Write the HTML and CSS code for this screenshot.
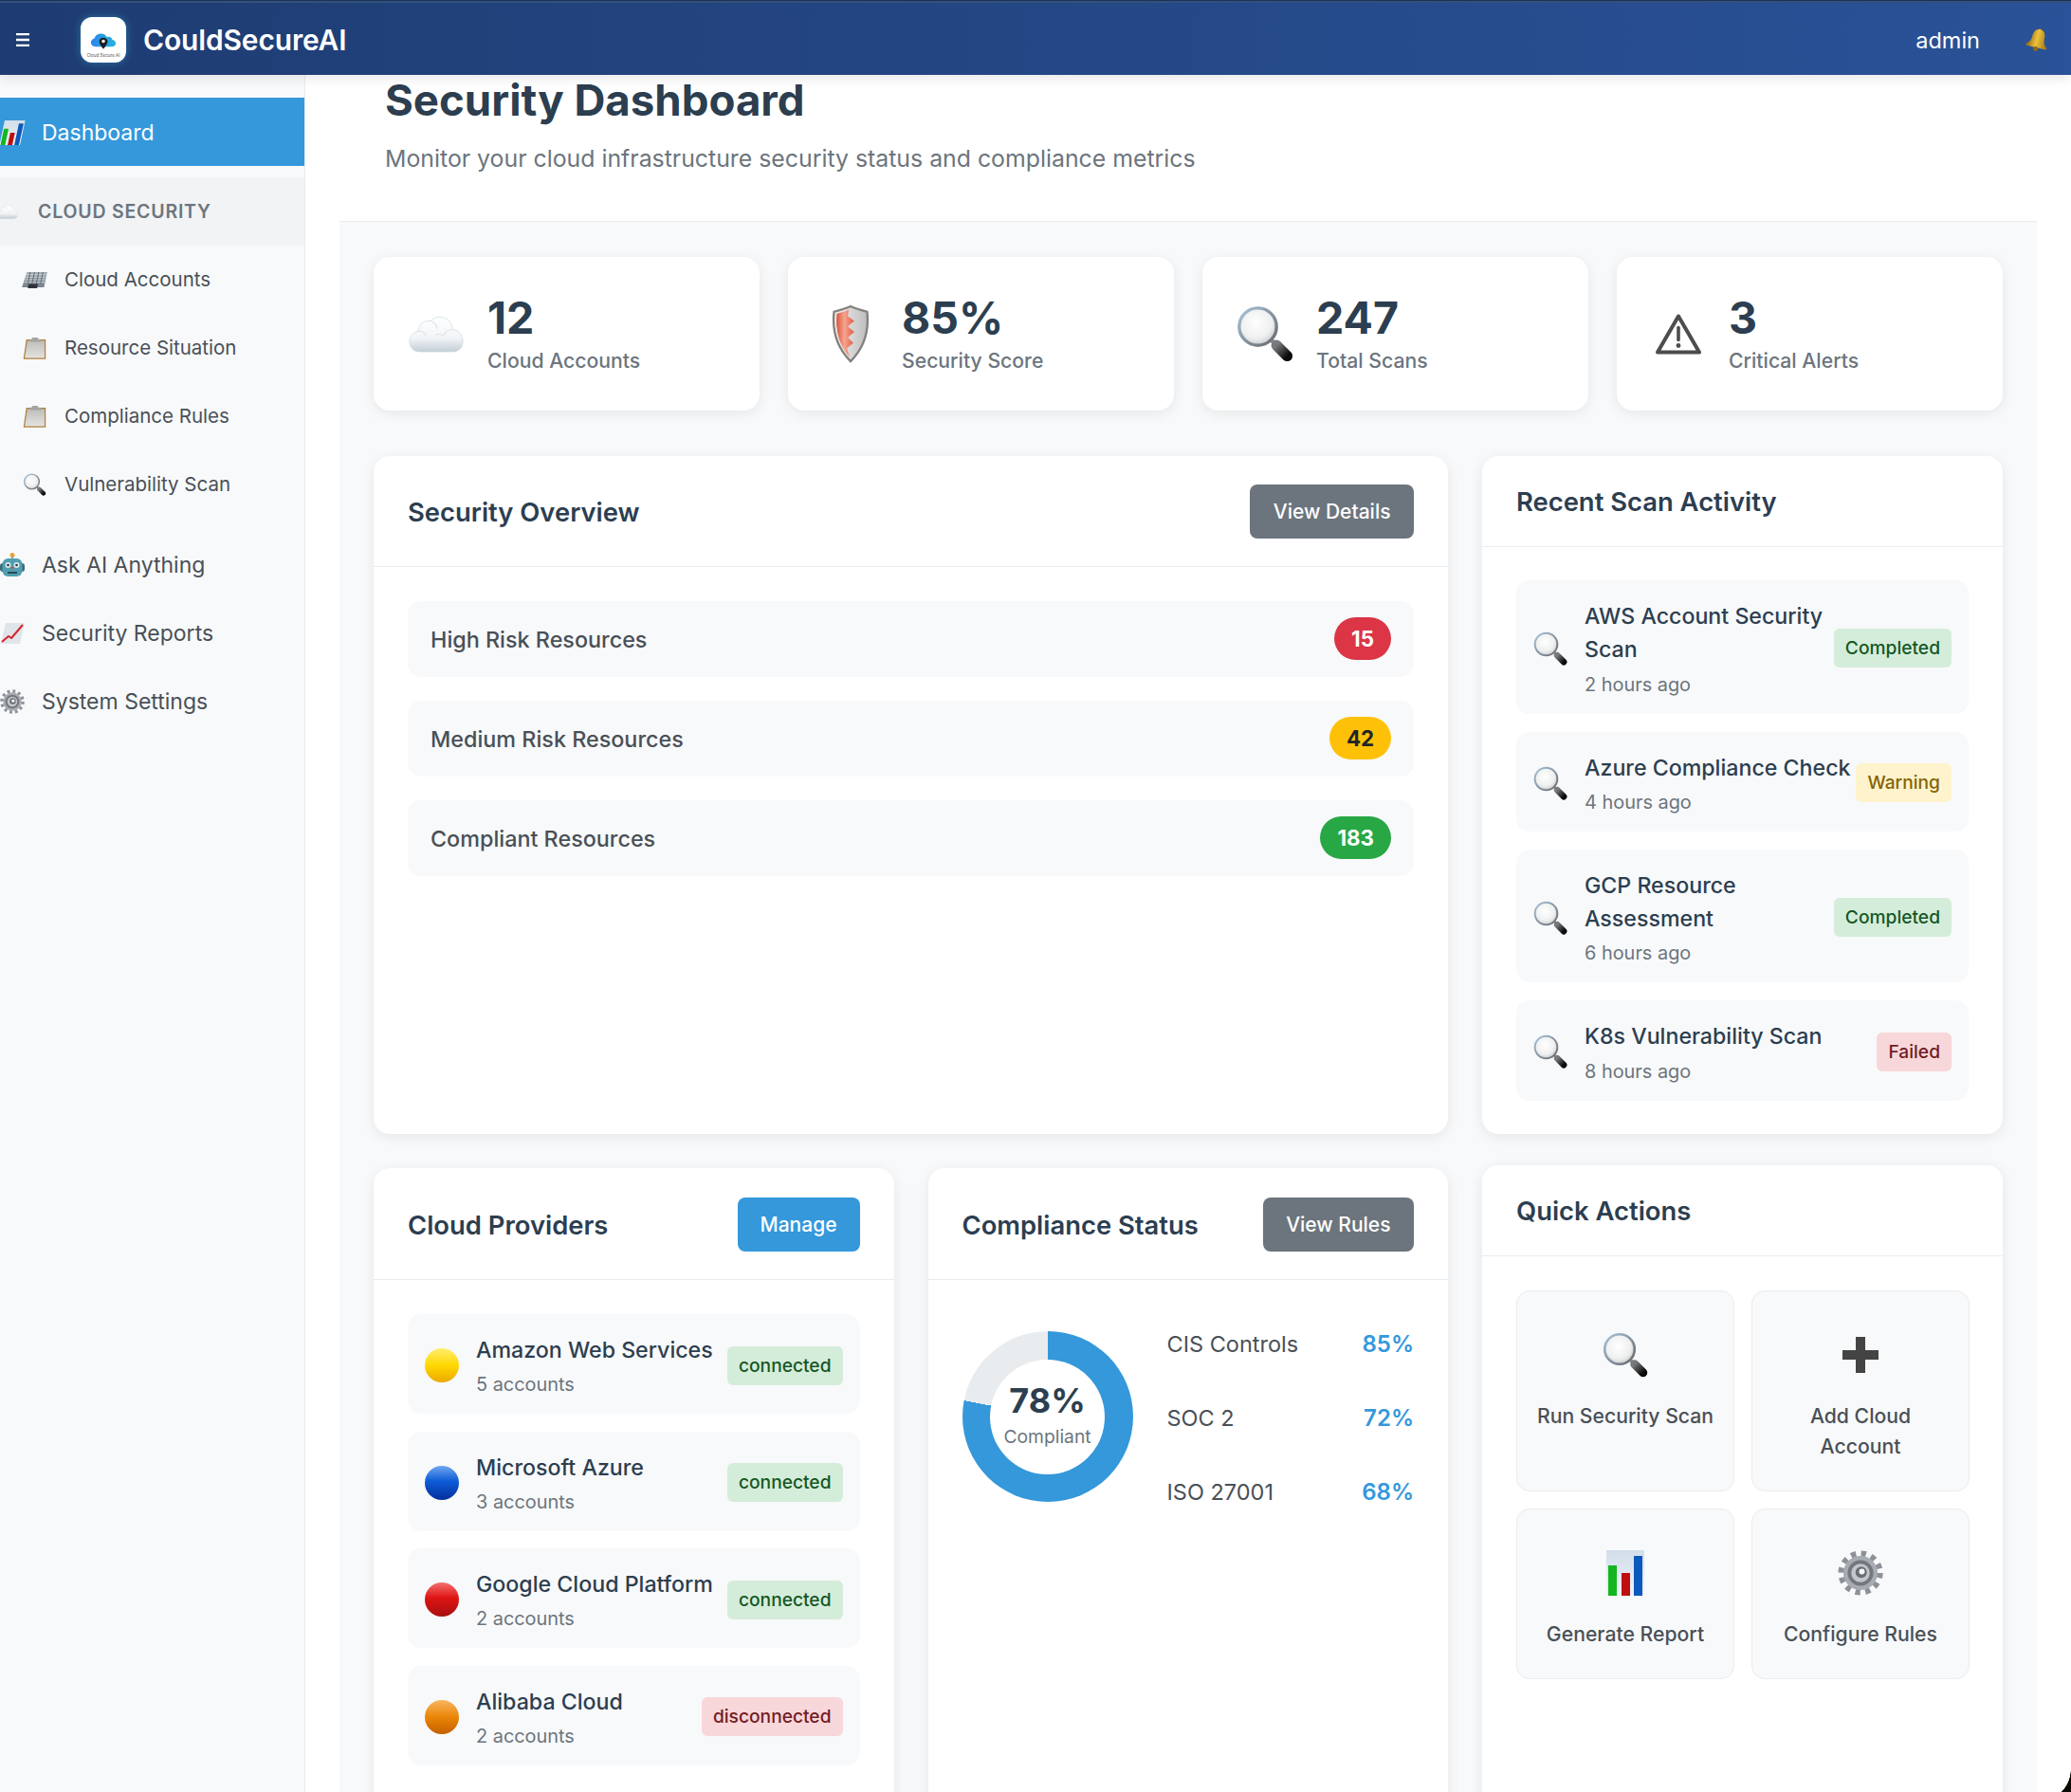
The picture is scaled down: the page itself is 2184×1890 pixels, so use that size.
FILE: index.html
```html
<!DOCTYPE html>
<html lang="en">
<head>
<meta charset="utf-8">
<title>CouldSecureAI</title>
<link rel="stylesheet" href="styles.css">
</head>
<body>
<svg class="defs" aria-hidden="true">
  <defs>
    <linearGradient id="g-cloud" x1="0" y1="0" x2="0" y2="1"><stop offset="0" stop-color="#fff"/><stop offset=".6" stop-color="#f2f5f7"/><stop offset="1" stop-color="#c2ced6"/></linearGradient>
    <linearGradient id="g-logo" x1="0" y1="0" x2="1" y2="0"><stop offset="0" stop-color="#2a86ea"/><stop offset="1" stop-color="#27b4dc"/></linearGradient>
    <linearGradient id="g-red" x1="0" y1="0" x2="1" y2="0"><stop offset="0" stop-color="#d9553f"/><stop offset=".45" stop-color="#f7a48f"/><stop offset="1" stop-color="#e05a42"/></linearGradient>
    <linearGradient id="g-silver" x1="0" y1="0" x2="1" y2="0"><stop offset="0" stop-color="#f2f2f2"/><stop offset="1" stop-color="#bdbdbd"/></linearGradient>
    <radialGradient id="g-lens" cx=".45" cy=".4" r=".6"><stop offset="0" stop-color="#fff"/><stop offset=".7" stop-color="#eeefef"/><stop offset="1" stop-color="#c9ccce"/></radialGradient>
    <linearGradient id="g-rim" x1="0" y1="0" x2="1" y2="1"><stop offset="0" stop-color="#a8c4dc"/><stop offset="1" stop-color="#66686b"/></linearGradient>
    <linearGradient id="g-handle" x1="0" y1="0" x2="1" y2="1"><stop offset="0" stop-color="#77797c"/><stop offset="1" stop-color="#0b0b0b"/></linearGradient>
    <linearGradient id="g-gold" x1="0" y1="0" x2="1" y2="0"><stop offset="0" stop-color="#8a6510"/><stop offset=".45" stop-color="#eec23c"/><stop offset="1" stop-color="#9c7210"/></linearGradient>
    <linearGradient id="g-y" x1="0" y1="0" x2="0" y2="1"><stop offset="0" stop-color="#ffee70"/><stop offset=".5" stop-color="#ffd800"/><stop offset="1" stop-color="#eba900"/></linearGradient>
    <linearGradient id="g-b" x1="0" y1="0" x2="0" y2="1"><stop offset="0" stop-color="#6fa8f0"/><stop offset=".45" stop-color="#0d5bd8"/><stop offset="1" stop-color="#03309a"/></linearGradient>
    <linearGradient id="g-r" x1="0" y1="0" x2="0" y2="1"><stop offset="0" stop-color="#f47070"/><stop offset=".45" stop-color="#de1414"/><stop offset="1" stop-color="#a81010"/></linearGradient>
    <linearGradient id="g-o" x1="0" y1="0" x2="0" y2="1"><stop offset="0" stop-color="#f9b560"/><stop offset=".5" stop-color="#ea8606"/><stop offset="1" stop-color="#c45f00"/></linearGradient>
    <linearGradient id="g-chartbg" x1="0" y1="0" x2="0" y2="1"><stop offset="0" stop-color="#d2deea"/><stop offset="1" stop-color="#eef3f7"/></linearGradient>
    <linearGradient id="g-clip" x1="0" y1="0" x2="0" y2="1"><stop offset="0" stop-color="#bcbcb8"/><stop offset="1" stop-color="#e4e4e0"/></linearGradient>
    <linearGradient id="g-bld" x1="0" y1="0" x2="0" y2="1"><stop offset="0" stop-color="#a5aeb5"/><stop offset="1" stop-color="#74808a"/></linearGradient>
    <symbol id="i-cloud" viewBox="0 0 64 44">
      <path fill="url(#g-cloud)" stroke="#cfd9e0" stroke-width=".8" d="M13 43C5 43 1 37 1 31c0-6 4-11 10-12 1-9 8-13 15-12 4-5 12-6 18-2 5 3 7 8 7 12 8 1 12 7 12 14 0 7-5 12-12 12z"/>
      <path fill="none" stroke="#dbe3e9" stroke-width="1.2" d="M11 19c4 0 8 2 9 5M26 7c4 2 7 5 7 9M51 17c-5 0-9 3-10 7M31 24c3-2 7-2 9 0"/>
    </symbol>
    <symbol id="i-shield" viewBox="0 0 42 64">
      <path fill="url(#g-silver)" stroke="#85807c" stroke-width="2.4" d="M21 2c6 3 12 4 18 6 2 18-2 38-18 54C5 46 1 26 3 8c6-2 12-3 18-6z"/>
      <path fill="url(#g-red)" d="M6 10c4-1 9-2 13-4l-1 7 7 5-7 6 7 6-7 6 6 6-7 6 3 9C9 46 4 28 6 10z"/>
    </symbol>
    <symbol id="i-mag" viewBox="0 0 64 64">
      <path stroke="#8b8f92" stroke-width="5" fill="none" d="M37 37l7 7"/>
      <path stroke="url(#g-handle)" stroke-width="12" stroke-linecap="round" fill="none" d="M45 45l12 12"/>
      <circle cx="24" cy="24" r="21" fill="url(#g-lens)" stroke="url(#g-rim)" stroke-width="3.600"/>
    </symbol>
    <symbol id="i-warn" viewBox="0 0 48 44">
      <path fill="none" stroke="#4b4d4f" stroke-width="4" stroke-linejoin="round" d="M24 3L46 41H2z"/>
      <path fill="none" stroke="#4b4d4f" stroke-width="3.6" stroke-linecap="round" d="M24 15v13"/>
      <circle cx="24" cy="34" r="2.4" fill="#4b4d4f"/>
    </symbol>
    <symbol id="i-building" viewBox="0 0 28 24">
      <path fill="url(#g-bld)" d="M3 3h24v18H1z"/>
      <path stroke="#d5dbe0" stroke-width="1" d="M3 6h23M3 9h23M3 12h23M2.500 15h24"/>
      <path stroke="#5c6770" stroke-width="1" d="M7 3v14M12 3v14M17 3v14M22 3v14"/>
      <path fill="#2e3338" d="M8 17h11v5H8z"/>
    </symbol>
    <symbol id="i-clip" viewBox="0 0 26 26">
      <path fill="url(#g-clip)" stroke="#b07d3c" stroke-width="1.300" d="M4 4h21v21H1z"/>
      <path fill="#a5a5a0" d="M10 1h7v2h3v3H8V3h2z"/>
    </symbol>
    <symbol id="i-chart" viewBox="0 0 40 48">
      <path fill="url(#g-chartbg)" d="M0 0h40v48H0z"/>
      <path fill="#13b61f" d="M2 16h9v32H2z"/>
      <path fill="#bf0f0f" d="M16 24h9v24h-9z"/>
      <path fill="#0c59bd" d="M29 6h9v42h-9z"/>
    </symbol>
    <symbol id="i-trend" viewBox="0 0 26 24">
      <path fill="#dfe5ea" d="M6 1h20l-5 22H1z"/>
      <path fill="none" stroke="#d6232b" stroke-width="2" stroke-linejoin="round" d="M2 21l7-6 3 2 12-14"/>
    </symbol>
    <symbol id="i-robot" viewBox="0 0 26 26">
      <circle cx="13" cy="2.500" r="2.500" fill="#e8a33a"/>
      <path stroke="#8c98a0" stroke-width="1.600" d="M13 4v3"/>
      <rect x="0" y="11" width="26" height="9" rx="3" fill="#3d6a78"/>
      <rect x="2.500" y="6" width="21" height="19" rx="6" fill="#4f9fb0"/>
      <circle cx="8.500" cy="13" r="3" fill="#dcecf0"/>
      <circle cx="17.500" cy="13" r="3" fill="#dcecf0"/>
      <circle cx="8.500" cy="13" r="1.300" fill="#24343c"/>
      <circle cx="17.500" cy="13" r="1.300" fill="#24343c"/>
      <path fill="#d8473c" d="M11 15h4l-2 2.500z"/>
      <path stroke="#24343c" stroke-width="1.600" d="M8 21h10"/>
    </symbol>
    <symbol id="i-gear" viewBox="0 0 64 64">
      <circle cx="32" cy="32" r="27" fill="none" stroke="#8e9298" stroke-width="9" stroke-dasharray="7 7.140"/>
      <circle cx="32" cy="32" r="24" fill="#a7acb2"/>
      <circle cx="32" cy="32" r="18" fill="#74787e"/>
      <circle cx="32" cy="32" r="13" fill="#c3c7cb"/>
      <circle cx="33" cy="31" r="8" fill="#6a6e73"/>
      <circle cx="34" cy="30" r="4" fill="#f4f5f6"/>
    </symbol>
    <symbol id="i-bell" viewBox="0 0 28 28">
      <g transform="rotate(14 14 14)">
        <circle cx="14" cy="3" r="2" fill="#a67d18"/>
        <path fill="url(#g-gold)" d="M14 2c5 0 7 4 7 9 0 5 2 8 5 10v2H2v-2c3-2 5-5 5-10 0-5 2-9 7-9z"/>
        <circle cx="14" cy="24.500" r="2.700" fill="#8f6a10"/>
      </g>
    </symbol>
    <symbol id="i-logo" viewBox="0 0 48 30">
      <path fill="url(#g-logo)" d="M11 24c-5 0-8-3-8-7 0-4 3-6 6-7 1-5 6-8 11-8 5 0 8 2 10 6 2-1 4-1 6 0 2 1 3 3 3 4 4 1 6 4 6 7 0 3-3 5-7 5z"/>
      <path fill="#1c1f24" d="M24 9c4 0 7 3 7 6 0 4-3 8-7 13-4-5-7-9-7-13 0-3 3-6 7-6z"/>
      <circle cx="24" cy="15" r="2.800" fill="#fff"/>
    </symbol>
  </defs>
</svg>

<div class="app">
  <header class="topbar">
    <svg class="burger" viewBox="0 0 14 14"><path d="M0 1h14M0 7h14M0 13h14"/></svg>
    <div class="logo">
      <svg class="logo-mark"><use href="#i-logo"/></svg>
      <span class="logo-text">Cloud Secure AI</span>
    </div>
    <div class="brand">CouldSecureAI</div>
    <div class="user">admin</div>
    <svg class="bell"><use href="#i-bell"/></svg>
  </header>

  <div class="layout">
    <nav class="sidebar">
      <a class="nav-item active"><svg class="nav-ic skew"><use href="#i-chart"/></svg>Dashboard</a>
      <div class="nav-section"><svg class="section-ic"><use href="#i-cloud"/></svg>CLOUD SECURITY</div>
      <a class="nav-sub"><svg class="sub-ic skew"><use href="#i-building"/></svg>Cloud Accounts</a>
      <a class="nav-sub"><svg class="sub-ic"><use href="#i-clip"/></svg>Resource Situation</a>
      <a class="nav-sub"><svg class="sub-ic"><use href="#i-clip"/></svg>Compliance Rules</a>
      <a class="nav-sub"><svg class="sub-ic"><use href="#i-mag"/></svg>Vulnerability Scan</a>
      <a class="nav-item first-after"><svg class="nav-ic"><use href="#i-robot"/></svg>Ask AI Anything</a>
      <a class="nav-item"><svg class="nav-ic"><use href="#i-trend"/></svg>Security Reports</a>
      <a class="nav-item"><svg class="nav-ic"><use href="#i-gear"/></svg>System Settings</a>
    </nav>

    <main class="main">
      <div class="page-head">
        <h1 class="page-title">Security Dashboard</h1>
        <p class="page-sub">Monitor your cloud infrastructure security status and compliance metrics</p>
      </div>

      <div class="content">
        <section class="stats">
          <div class="stat"><div class="stat-ic"><svg class="ic-cloud"><use href="#i-cloud"/></svg></div><div><div class="stat-num">12</div><div class="stat-label">Cloud Accounts</div></div></div>
          <div class="stat"><div class="stat-ic"><svg class="ic-shield"><use href="#i-shield"/></svg></div><div><div class="stat-num">85%</div><div class="stat-label">Security Score</div></div></div>
          <div class="stat"><div class="stat-ic"><svg class="ic-mag-lg"><use href="#i-mag"/></svg></div><div><div class="stat-num">247</div><div class="stat-label">Total Scans</div></div></div>
          <div class="stat"><div class="stat-ic narrow"><svg class="ic-warn"><use href="#i-warn"/></svg></div><div><div class="stat-num">3</div><div class="stat-label">Critical Alerts</div></div></div>
        </section>

        <div class="columns">
          <div class="col">
            <section class="card fixed">
              <div class="card-head">
                <h2 class="card-title">Security Overview</h2>
                <a class="btn btn-grey">View Details</a>
              </div>
              <div class="card-body risk-list">
                <div class="risk"><span>High Risk Resources</span><span class="pill pill-red">15</span></div>
                <div class="risk"><span>Medium Risk Resources</span><span class="pill pill-yellow">42</span></div>
                <div class="risk"><span>Compliant Resources</span><span class="pill pill-green">183</span></div>
              </div>
            </section>

            <div class="two">
              <section class="card tall">
                <div class="card-head">
                  <h2 class="card-title">Cloud Providers</h2>
                  <a class="btn btn-blue">Manage</a>
                </div>
                <div class="card-body list">
                  <div class="row"><svg class="ball"><circle cx="18" cy="18" r="18" fill="url(#g-y)"/></svg><div class="row-text"><div class="row-name">Amazon Web Services</div><div class="row-meta">5 accounts</div></div><span class="tag tag-ok">connected</span></div>
                  <div class="row"><svg class="ball"><circle cx="18" cy="18" r="18" fill="url(#g-b)"/></svg><div class="row-text"><div class="row-name">Microsoft Azure</div><div class="row-meta">3 accounts</div></div><span class="tag tag-ok">connected</span></div>
                  <div class="row"><svg class="ball"><circle cx="18" cy="18" r="18" fill="url(#g-r)"/></svg><div class="row-text"><div class="row-name">Google Cloud Platform</div><div class="row-meta">2 accounts</div></div><span class="tag tag-ok">connected</span></div>
                  <div class="row"><svg class="ball"><circle cx="18" cy="18" r="18" fill="url(#g-o)"/></svg><div class="row-text"><div class="row-name">Alibaba Cloud</div><div class="row-meta">2 accounts</div></div><span class="tag tag-bad">disconnected</span></div>
                </div>
              </section>

              <section class="card tall">
                <div class="card-head">
                  <h2 class="card-title">Compliance Status</h2>
                  <a class="btn btn-grey">View Rules</a>
                </div>
                <div class="card-body compliance">
                  <div class="donut"><div class="donut-hole"><div class="donut-num">78%</div><div class="donut-label">Compliant</div></div></div>
                  <div class="metrics">
                    <div class="metric"><span>CIS Controls</span><b>85%</b></div>
                    <div class="metric"><span>SOC 2</span><b>72%</b></div>
                    <div class="metric"><span>ISO 27001</span><b>68%</b></div>
                  </div>
                </div>
              </section>
            </div>
          </div>

          <div class="col side">
            <section class="card fixed">
              <div class="card-head plain">
                <h2 class="card-title">Recent Scan Activity</h2>
              </div>
              <div class="card-body list">
                <div class="row"><svg class="row-ic"><use href="#i-mag"/></svg><div class="row-text"><div class="row-name">AWS Account Security Scan</div><div class="row-meta">2 hours ago</div></div><span class="tag tag-ok">Completed</span></div>
                <div class="row"><svg class="row-ic"><use href="#i-mag"/></svg><div class="row-text"><div class="row-name">Azure Compliance Check</div><div class="row-meta">4 hours ago</div></div><span class="tag tag-warn">Warning</span></div>
                <div class="row"><svg class="row-ic"><use href="#i-mag"/></svg><div class="row-text"><div class="row-name">GCP Resource Assessment</div><div class="row-meta">6 hours ago</div></div><span class="tag tag-ok">Completed</span></div>
                <div class="row"><svg class="row-ic"><use href="#i-mag"/></svg><div class="row-text"><div class="row-name">K8s Vulnerability Scan</div><div class="row-meta">8 hours ago</div></div><span class="tag tag-bad">Failed</span></div>
              </div>
            </section>

            <section class="card tall">
              <div class="card-head plain">
                <h2 class="card-title">Quick Actions</h2>
              </div>
              <div class="card-body actions">
                <a class="action"><div class="action-ic"><svg class="ic-mag-md"><use href="#i-mag"/></svg></div>Run Security Scan</a>
                <a class="action"><div class="action-ic"><svg class="ic-plus" viewBox="0 0 38 38"><path d="M14 0h10v14h14v10H24v14H14V24H0V14h14z"/></svg></div>Add Cloud Account</a>
                <a class="action"><div class="action-ic"><svg class="ic-chart-md"><use href="#i-chart"/></svg></div>Generate Report</a>
                <a class="action"><div class="action-ic"><svg class="ic-gear-md"><use href="#i-gear"/></svg></div>Configure Rules</a>
              </div>
            </section>
          </div>
        </div>
      </div>
    </main>
  </div>
  <div class="window-corner"></div>
</div>
</body>
</html>
```

FILE: styles.css
```css
* { box-sizing: border-box; }
html, body { margin: 0; height: 100%; }
body {
  font-family: Inter, "Noto Sans", sans-serif;
  color: #2c3e50;
  background: #fff;
  overflow: hidden;
}
.defs { position: absolute; width: 0; height: 0; }
.app { position: relative; display: flex; flex-direction: column; height: 1890px; overflow: hidden; }

/* top bar */
.topbar {
  position: relative;
  z-index: 2;
  flex: none;
  height: 79px;
  display: flex;
  align-items: center;
  padding: 5px 22px 0 17px;
  color: #fff;
  background: linear-gradient(90deg, #1e3c72, #2a5298);
  box-shadow: 0 3px 12px rgba(0, 0, 0, .1);
}
.topbar::before {
  content: "";
  position: absolute;
  inset: 0 0 auto 0;
  height: 3px;
  background: linear-gradient(#1b3359 0 1px, #34517b 1px);
}
.burger { width: 14px; height: 14px; stroke: #fff; stroke-width: 2.4; }
.logo {
  width: 48px;
  height: 48px;
  margin-left: 54px;
  border-radius: 12px;
  background: #fff;
  box-shadow: 0 0 8px rgba(60, 190, 220, .45);
  display: flex;
  flex-direction: column;
  align-items: center;
  justify-content: flex-end;
  padding-bottom: 4px;
}
.logo-mark { width: 30px; height: 19px; margin-bottom: 3px; }
.logo-text { font-size: 4.600px; line-height: 6px; color: #555; white-space: nowrap; }
.brand { margin-left: 18px; font-size: 29.900px; font-weight: 600; letter-spacing: -.1px; }
.user { margin-left: auto; font-size: 23.500px; font-weight: 400; }
.bell { width: 26px; height: 26px; margin-left: 48px; }

/* layout */
.layout { flex: 1; display: flex; min-height: 0; }
.sidebar {
  flex: none;
  width: 322px;
  padding-top: 24px;
  background: #f8f9fa;
  border-right: 1px solid #e9ecef;
  overflow: hidden;
}
.nav-item, .nav-sub, .nav-section { display: flex; align-items: center; height: 72px; white-space: nowrap; }
.nav-item { gap: 18px; font-size: 23px; color: #495057; padding-top: 1px; }
.nav-item.active { background: #3498db; color: #fff; margin-bottom: 12px; width: 321px; }
.nav-item.first-after { margin-top: 12px; }
.nav-ic { flex: none; width: 26px; height: 26px; }
.skew { transform: skewX(-12deg); }
.nav-section {
  background: #f1f3f5;
  gap: 21px;
  font-size: 19.500px;
  font-weight: 600;
  letter-spacing: .8px;
  color: #6c757d;
}
.section-ic { flex: none; width: 22px; height: 15px; margin-left: -3px; }
.nav-sub { padding-left: 24px; gap: 19px; font-size: 20.500px; color: #495057; padding-bottom: 1px; }
.sub-ic { flex: none; width: 25px; height: 24px; }

/* main */
.main { flex: 1; min-width: 0; overflow: hidden; padding: 0 36px; background: #fff; }
.page-head { height: 155px; padding-left: 48px; border-bottom: 1px solid #e9ecef; }
.page-title { margin: 0; height: 54px; line-height: 54px; font-size: 45.600px; font-weight: 700; color: #2c3e50; }
.page-sub { margin: 17px 0 0; line-height: 34px; font-size: 24.840px; color: #6c757d; }
.content { background: #f8f9fa; padding: 37px 36px 0; height: 1700px; }

.stats { display: grid; grid-template-columns: repeat(4, 1fr); gap: 30px; margin-bottom: 48px; }
.stat {
  height: 162px;
  display: flex;
  align-items: center;
  gap: 24px;
  padding: 0 36px;
  background: #fff;
  border-radius: 17px;
  box-shadow: 0 3px 14px rgba(0, 0, 0, .08);
}
.stat-ic { flex: none; width: 60px; display: flex; justify-content: center; align-items: center; }
.stat-ic.narrow { width: 58px; }
.ic-cloud { width: 58px; height: 40px; }
.ic-shield { width: 42px; height: 62px; }
.ic-mag-lg { width: 60px; height: 60px; }
.ic-warn { width: 48px; height: 45px; }
.stat-num { font-size: 46.500px; line-height: 50px; margin-bottom: 5px; font-weight: 700; color: #2c3e50; }
.stat-label { font-size: 21.200px; line-height: 30px; color: #6c757d; font-weight: 500; }

.columns { display: grid; grid-template-columns: 1133fr 549fr; gap: 36px; }
.col { display: flex; flex-direction: column; gap: 36px; min-width: 0; }
.col.side { gap: 33px; }
.two { display: grid; grid-template-columns: 1fr 1fr; gap: 36px; }
.card { background: #fff; border-radius: 17px; box-shadow: 0 3px 14px rgba(0, 0, 0, .08); }
.card.fixed { height: 715px; }
.tall { min-height: 760px; }
.card-head {
  height: 117px;
  padding: 1px 36px 0;
  display: flex;
  align-items: center;
  justify-content: space-between;
  border-bottom: 1px solid #e9ecef;
}
.two .card-head { height: 118px; padding-top: 2px; }
.card-head.plain { height: 96px; }
.card-title { margin: 0; font-size: 27.400px; font-weight: 600; color: #2c3e50; }
.btn {
  height: 57px;
  display: flex;
  align-items: center;
  padding: 0 24.500px;
  border-radius: 8px;
  font-size: 21px;
  font-weight: 500;
  color: #fff;
}
.btn-blue { padding: 0 24px; }
.btn-grey { background: #6c757d; }
.btn-blue { background: #3498db; }
.card-body { padding: 36px; }
.fixed .plain + .card-body { padding-top: 35px; }

.risk-list { display: flex; flex-direction: column; gap: 25.500px; }
.risk {
  height: 79.500px;
  display: flex;
  align-items: center;
  justify-content: space-between;
  padding: 0 24px;
  border-radius: 14px;
  background: #f8f9fa;
  font-size: 23.350px;
  font-weight: 500;
  color: #495057;
}
.risk > span:first-child { padding-top: 2px; }
.pill { height: 45px; min-width: 60px; padding: 0 18px; border-radius: 23px; display: flex; align-items: center; justify-content: center; font-size: 22.300px; font-weight: 700; color: #fff; }
.pill-red { background: #dc3545; }
.pill-yellow { background: #ffc107; color: #212529; }
.pill-green { background: #28a745; }

.list { display: flex; flex-direction: column; gap: 19px; }
.two .list { gap: 18.250px; }
.row { display: flex; align-items: center; padding: 16px 18px 13px; border-radius: 14px; background: #f8f9fa; }
.row-ic, .ball { flex: none; width: 36px; height: 36px; margin-right: 18px; }
.row-text { flex: 1; min-width: 0; padding-top: 5px; }
.row-name { font-size: 23.200px; line-height: 35.250px; font-weight: 500; color: #2c3e50; }
.row-meta { font-size: 19.900px; line-height: 36px; color: #6c757d; }
.tag { flex: none; padding: 0 12px; height: 41px; line-height: 41px; border-radius: 6px; font-size: 19.200px; font-weight: 500; }
.tag-ok { background: #d4edda; color: #155724; }
.tag-warn { background: #fff3cd; color: #856404; }
.tag-bad { background: #f8d7da; color: #721c24; }

.compliance { display: flex; gap: 36px; }
.donut {
  flex: none;
  width: 180px;
  height: 180px;
  margin-top: 18px;
  border-radius: 50%;
  background: conic-gradient(#3498db 0 78%, #e9ecef 78% 100%);
  display: flex;
  align-items: center;
  justify-content: center;
}
.donut-hole { width: 121px; height: 121px; border-radius: 50%; background: #fff; text-align: center; padding-top: 21px; }
.donut-num { font-size: 36px; line-height: 44px; font-weight: 700; color: #2c3e50; }
.donut-label { font-size: 19.300px; line-height: 32px; color: #6c757d; }
.metrics { flex: 1; display: flex; flex-direction: column; gap: 42px; padding-top: 13px; }
.metric { height: 36px; display: flex; align-items: center; justify-content: space-between; font-size: 23.500px; color: #495057; }
.metric b { font-size: 24px; font-weight: 600; color: #3498db; }

.actions { display: grid; grid-template-columns: 230px 230px; gap: 18px; }
.action {
  padding: 32px 18px 31px;
  border: 1px solid #e9ecef;
  border-radius: 14px;
  background: #f8f9fa;
  text-align: center;
  font-size: 21.200px;
  line-height: 32px;
  font-weight: 500;
  color: #495057;
}
.action-ic { height: 70px; margin-bottom: 13px; display: flex; align-items: center; justify-content: center; }
.ic-mag-md { width: 48px; height: 48px; }
.ic-plus { width: 38px; height: 38px; fill: #444; }
.ic-chart-md { width: 42px; height: 48px; }
.ic-gear-md { width: 48px; height: 48px; }

.window-corner {
  position: absolute;
  right: 0;
  bottom: 0;
  width: 12px;
  height: 24px;
  background: radial-gradient(circle at -22px 0, transparent 33.500px, #0d0a02 34px);
}
```
